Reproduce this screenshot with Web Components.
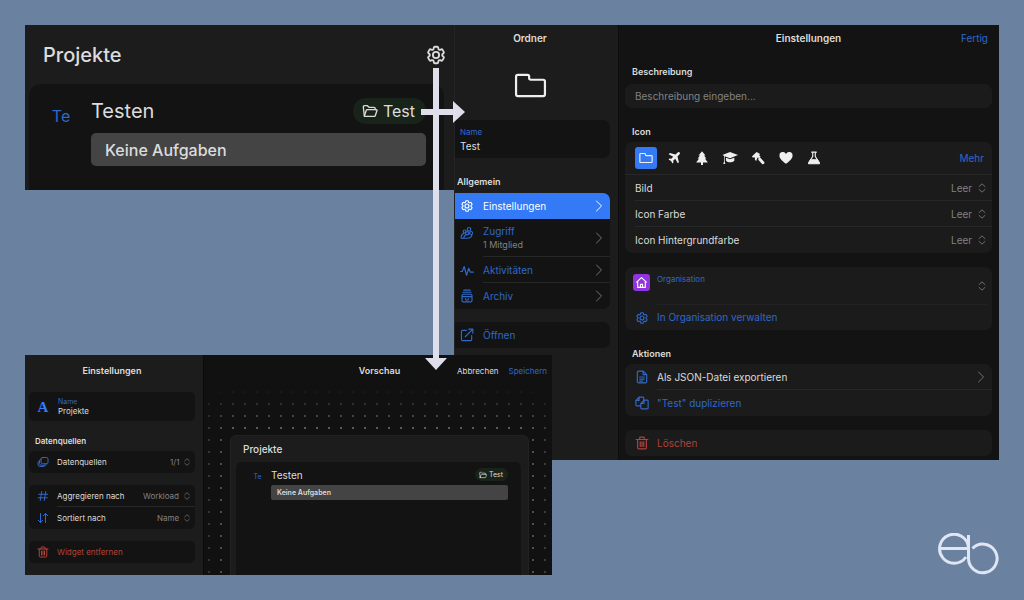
<!DOCTYPE html>
<html lang="de">
<head>
<meta charset="utf-8">
<meta name="viewport" content="width=device-width, initial-scale=1">
<title>Projekte – Einstellungen</title>
<style>
  :root {
    --panel: #1c1c1c;
    --deep: #131313;
    --text: #dcdcdc;
    --muted: #828282;
    --accent: #3068c8;
    --bright: #347af6;
    --danger: #b0433a;
    --line: #272727;
  }
  body {
    margin: 0;
    background: #6a81a0;
    color: var(--text);
    font: 10px/14px Inter, "Liberation Sans", sans-serif;
  }
</style>
</head>
<body>
<eb-stage></eb-stage>

<script>
const ICONS = {
  gear: '<path d="M9.594 3.94c.09-.542.56-.94 1.11-.94h2.593c.55 0 1.02.398 1.11.94l.213 1.281c.063.374.313.686.645.87.074.04.147.083.22.127.325.196.72.257 1.075.124l1.217-.456a1.125 1.125 0 0 1 1.37.49l1.296 2.247a1.125 1.125 0 0 1-.26 1.431l-1.003.827c-.293.241-.438.613-.43.992a7.723 7.723 0 0 1 0 .255c-.008.378.137.75.43.991l1.004.827c.424.35.534.955.26 1.43l-1.298 2.247a1.125 1.125 0 0 1-1.369.491l-1.217-.456c-.355-.133-.75-.072-1.076.124a6.47 6.47 0 0 1-.22.128c-.331.183-.581.495-.644.869l-.213 1.281c-.09.543-.56.94-1.11.94h-2.594c-.55 0-1.019-.398-1.11-.94l-.213-1.281c-.062-.374-.312-.686-.644-.87a6.52 6.52 0 0 1-.22-.127c-.325-.196-.72-.257-1.076-.124l-1.217.456a1.125 1.125 0 0 1-1.369-.49l-1.297-2.247a1.125 1.125 0 0 1 .26-1.431l1.004-.827c.292-.24.437-.613.43-.991a6.932 6.932 0 0 1 0-.255c.007-.38-.138-.751-.43-.992l-1.004-.827a1.125 1.125 0 0 1-.26-1.43l1.297-2.247a1.125 1.125 0 0 1 1.37-.491l1.216.456c.356.133.751.072 1.076-.124.072-.044.146-.086.22-.128.332-.183.582-.495.644-.869l.214-1.28Z"/><circle cx="12" cy="12" r="3.4"/>',
  folder: '<path d="M1.500 5.600a1.300 1.300 0 0 1 1.300-1.300h7a1.200 1.200 0 0 1 1.200 1.200v1.100a1.200 1.200 0 0 0 1.200 1.200H21.200A1.300 1.300 0 0 1 22.500 9.100V18.400A1.300 1.300 0 0 1 21.200 19.700H2.800A1.300 1.300 0 0 1 1.500 18.400Z"/>',
  folderOpen: '<path d="M3.500 19.500 2 6A1.800 1.800 0 0 1 3.800 4H8l2.500 2.500H18A1.800 1.800 0 0 1 19.800 8.300V10"/><path d="M3.500 19.500 6.300 11.300A1.800 1.800 0 0 1 8 10H21.500a1 1 0 0 1 1 1.300L20 18.800A1.500 1.500 0 0 1 18.500 20H4.200A.8.8 0 0 1 3.500 19.500Z"/>',
  people: '<circle cx="15.500" cy="5.500" r="3"/><circle cx="8" cy="9.500" r="2.600"/><circle cx="19" cy="12" r="2.600"/><circle cx="12.300" cy="12.500" r="2.800"/><path d="M2 20.500c0-4 1.700-7 4-7.500M6.500 21c.2-3.500 1.700-5.500 4-6M2 20.500c1.300.8 3 .8 4.500.5h5.500c4 0 8-2 8.500-6"/>',
  pulse: '<path d="M1 14.500h2.800L7.200 6l4 15 3.800-12 2.600 6.500H23"/>',
  archive: '<path d="M6.500 2h11M5 5.500h14"/><rect x="3.500" y="9" width="17" height="13" rx="2"/><path d="M4 13h16M9.500 16.500a2.500 2.500 0 0 0 5 0"/>',
  open: '<path d="M11 4H4.500A2 2 0 0 0 2.500 6v13.500a2 2 0 0 0 2 2H18a2 2 0 0 0 2-2V13M9 15 22 2M15 2h7v7"/>',
  chevron: '<path d="m7 2 10 10L7 22"/>',
  updown: '<path d="m5 8.500 7-6.500 7 6.500M5 15.500l7 6.500 7-6.500"/>',
  plane: '<path fill="currentColor" stroke="none" d="M21.600 2.400c-1-1-2.700-.6-3.800.5L14.600 6 4.800 3.600 2.900 5.500l7.800 4.400-3.400 3.500-3-.5L2.600 14.600l4.300 2.500 2.500 4.300 1.700-1.700-.5-3 3.500-3.400 4.400 7.800 1.900-1.900L18 9.400l3.100-3.200c1.100-1.100 1.500-2.800.5-3.800Z"/>',
  tree: '<path fill="currentColor" stroke="none" d="m12 .5 6 7h-2.500l4 5.500H17l5 6.500h-8.300V24h-3.400v-4.500H2L7 13H4.500l4-5.500H6Z"/>',
  cap: '<path fill="currentColor" stroke="none" d="M12 3 .5 7.500 3 8.600V17l-1 4h3l-1-4V9.200l8 3.200L24 7.500ZM6 11.500V16c3 3.300 9 3.300 12.500 0v-4.500L12 14Z"/>',
  hammer: '<path fill="currentColor" stroke="none" d="m1.500 9.500 8-8 5.500 3-.5 3.500 2 2-2.500 2.500-2-1.500-1.500 1.500L9 17l-2.500-2 .5-3.500-2-1-1.500 1Z"/><path stroke="currentColor" stroke-width="5" d="m15 14 5.500 6"/>',
  heart: '<path fill="currentColor" stroke="none" d="M12 22C4.500 16 .8 12.500.8 8A5.900 5.900 0 0 1 12 5 5.900 5.900 0 0 1 23.200 8c0 4.500-3.700 8-11.200 14Z"/>',
  flask: '<path d="M8 2h8M9.800 2v7.500L3 20a1.200 1.200 0 0 0 1 1.800h16a1.200 1.200 0 0 0 1-1.800L14.200 9.500V2"/><path fill="currentColor" d="M6.500 15h11l3.500 6H3Z"/>',
  home: '<path d="M3 11.500 12 3l9 8.500M5 10v11h14V10"/><path d="M10 21v-5.500h4V21"/>',
  file: '<path d="M14 2H6a2 2 0 0 0-2 2v16a2 2 0 0 0 2 2h12a2 2 0 0 0 2-2V8ZM14 2v6h6M8 12h8M8 15.500h8M8 19h5"/>',
  copy: '<path d="M9.500 17H3a1.500 1.500 0 0 1-1.500-1.500V7.500L7 2h6.500A1.500 1.500 0 0 1 15 3.500V6.500M7 2v5.500H1.500"/><path d="M15.500 7H21a1.500 1.500 0 0 1 1.500 1.500V20.500A1.500 1.500 0 0 1 21 22H11.500A1.500 1.500 0 0 1 10 20.500V12.500ZM15.500 7v5.500H10"/>',
  trash: '<path d="M2 6h20M8 6V3.500A1.500 1.500 0 0 1 9.500 2h5A1.500 1.500 0 0 1 16 3.500V6M4.500 6v14A2 2 0 0 0 6.500 22h11a2 2 0 0 0 2-2V6M9 10v8M12 10v8M15 10v8"/>',
  stack: '<rect x="8" y="3" width="14" height="12.500" rx="3"/><path d="M8 6.500C6 6.500 5 7.500 5 9.500v5.500a3.500 3.500 0 0 0 3.500 3.500H16c2 0 3-1 3-3M5 10c-2 .3-3 1.500-3 3.500v3A4.500 4.500 0 0 0 6.500 21H13c2 0 3-1 3-2.500"/>',
  hash: '<path d="M9.500 3 6.500 21M17.500 3l-3 18M3.500 8.500h18M2.500 15.500h18"/>',
  sort: '<path d="M7 3v18M2.500 16.500 7 21l4.500-4.500M17 21V3M12.500 7.500 17 3l4.500 4.500"/>'
};

const define = (tag, css, markup, setup) => {
  const template = document.createElement('template');
  template.innerHTML = `<style>
    *, *::before { box-sizing: border-box; }
    button, input, select { font: inherit; color: inherit; background: none; border: 0; padding: 0; margin: 0; appearance: none; text-align: left; min-width: 0; outline: 0; }
    h1, h2, h3, p { margin: 0; font: inherit; }
    a { color: inherit; text-decoration: none; }
    ${css}</style>${markup}`;
  customElements.define(tag, class extends HTMLElement {
    constructor() {
      super();
      this.attachShadow({ mode: 'open' }).append(template.content.cloneNode(true));
    }
    connectedCallback() { setup?.(this, this.shadowRoot); }
  });
};

define('eb-icon', `
  :host { display: inline-flex; flex: none; width: var(--icon, 14px); height: var(--icon, 14px); }
  svg { width: 100%; height: 100%; display: block; fill: none; stroke: currentColor; stroke-linecap: round; stroke-linejoin: round; stroke-width: var(--stroke, 2); overflow: visible; }
`, '<svg viewBox="0 0 24 24" aria-hidden="true"></svg>', (host, root) => {
  root.querySelector('svg').innerHTML = ICONS[host.getAttribute('name')] || '';
});

/* Window heading with optional actions on the right */
define('title-bar', `
  :host { display: grid; grid-template-columns: 1fr auto 1fr; align-items: center; height: var(--bar, 26px); }
  h2 { grid-column: 2; font-weight: 600; }
  div { display: flex; justify-content: flex-end; gap: 10px; }
`, '<h2><slot></slot></h2><div><slot name="actions"></slot></div>');

define('text-button', `
  :host { display: inline-flex; color: var(--accent); }
`, '<button type="button"><slot></slot></button>');

define('section-title', `
  :host { display: block; font-weight: 600; font-size: var(--section, 9px); }
`, '<h3><slot></slot></h3>');

define('list-card', `
  :host { display: flex; flex-direction: column; background: var(--card, var(--deep)); border-radius: var(--round, 7px); overflow: hidden; }
`, '<slot></slot>');

/* Clickable row: icon, caption, optional second line and chevron */
define('action-row', `
  :host { display: block; color: var(--accent); }
  :host([tone=plain]) { color: var(--text); }
  :host([tone=danger]) { color: var(--danger); }
  :host([active]) { background: var(--bright); color: #fff; }
  button { display: flex; width: 100%; height: var(--row, 26px); padding-left: var(--lead, 7px); gap: var(--gap, 9px); align-items: stretch; }
  eb-icon { align-self: center; }
  .icon { color: var(--accent); }
  :host([active]) .icon, :host([tone=danger]) .icon { color: inherit; }
  .body { flex: 1; display: flex; align-items: center; padding-right: 5px; border-bottom: 1px solid transparent; }
  :host([divider]) .body { border-color: var(--line); }
  .text { flex: 1; display: flex; flex-direction: column; }
  .note { color: var(--muted); font-size: 9px; }
  .note:empty { display: none; }
  :host([note]) .icon { align-self: flex-start; margin-top: 7px; }
  .chevron { --icon: 12px; color: #747474; }
  :host(:not([chevron])) .chevron { display: none; }
  :host([active]) .chevron { color: #fff; }
`, `<button type="button"><eb-icon class="icon"></eb-icon><span class="body"><span class="text"><span><slot></slot></span><span class="note"></span></span><eb-icon class="chevron" name="chevron"></eb-icon></span></button>`,
(host, root) => {
  root.querySelector('.note').textContent = host.getAttribute('note') || '';
  const icon = document.createElement('eb-icon');
  icon.className = 'icon';
  icon.setAttribute('name', host.getAttribute('icon'));
  root.querySelector('.icon').replaceWith(icon);
});

/* Row holding a drop-down */
define('select-row', `
  :host { display: flex; height: var(--row, 26px); padding-left: var(--lead, 10px); gap: var(--gap, 7px); align-items: stretch; }
  ::slotted(eb-icon) { align-self: center; color: var(--accent); }
  .body { flex: 1; display: flex; align-items: center; gap: var(--arrow-gap, 4px); padding-right: var(--arrow-end, 5px); border-bottom: 1px solid transparent; }
  :host([divider]) .body { border-color: var(--line); }
  label { flex: 1; white-space: nowrap; }
  select { color: var(--muted); }
  eb-icon { --icon: var(--arrow, 10px); color: var(--muted); }
`, `<slot name="icon"></slot><div class="body"><label for="choice"><slot></slot></label><select id="choice"><option></option></select><eb-icon name="updown"></eb-icon></div>`,
(host, root) => { root.querySelector('option').textContent = host.getAttribute('value'); });

define('name-field', `
  :host { display: flex; align-items: center; background: var(--deep); padding-left: 7px; gap: var(--gap, 7px); height: var(--field, 38px); border-radius: var(--round, 7px); }
  div { flex: 1; display: flex; flex-direction: column; min-width: 0; }
  label { color: var(--accent); font-size: var(--caption, 8px); line-height: var(--caption-line, 14px); }
  input { width: 100%; height: var(--value-line, 14px); }
`, '<slot name="icon"></slot><div><label for="name">Name</label><input id="name" type="text"></div>',
(host, root) => { root.querySelector('input').value = host.getAttribute('value'); });

/* Project list widget, used at full size and as a small preview */
define('project-widget', `
  :host { display: flex; flex-direction: column; background: var(--panel);
    --head: 59px; --head-pad: 18px; --size: 20px; --sub: 16px; --inset: 0 10px 0 4px; --col: 62px; --te-pad: 2px;
    --pad: 14px 18px 24px 0; --line-h: 26px; --te-h: 36px; --v: 9px; --bar-h: 33px; --bar-pad: 14px; --r: 12px; --bar-r: 5px;
    --pill: 0 11px 0 9px; --pill-gap: 5px; --pill-icon: 16px; --head-size: 20px; }
  :host([small]) { border: 1px solid #222; border-bottom: 0; border-radius: 6px 6px 0 0;
    --head: 26px; --head-pad: 12px; --size: 10px; --sub: 7px; --inset: 0 7px 0 5px; --col: 35px; --te-pad: 8px;
    --pad: 6px 13px 0 0; --line-h: 13px; --te-h: 18px; --v: 4px; --bar-h: 15px; --bar-pad: 6px; --r: 6px; --bar-r: 2px;
    --pill: 0 5px 0 4px; --pill-gap: 2px; --pill-icon: 8px; --head-size: 10px; }
  header { display: flex; justify-content: space-between; align-items: center; height: var(--head); padding: 0 7px 0 var(--head-pad); }
  h2 { font-size: var(--head-size); font-weight: 500; }
  section { flex: 1; display: grid; grid-template-columns: var(--col) 1fr; grid-template-rows: var(--line-h) var(--bar-h); row-gap: var(--v);
    margin: var(--inset); padding: var(--pad); background: var(--deep); border-radius: var(--r) var(--r) 0 0; }
  .te { color: var(--accent); font-size: var(--sub); line-height: var(--te-h); text-align: center; padding-left: var(--te-pad); }
  .top { display: flex; justify-content: space-between; align-items: center; font-size: var(--size); }
  .pill { display: flex; align-items: center; gap: var(--pill-gap); height: var(--line-h); padding: var(--pill); border-radius: 13px; background: #18231a; font-size: var(--sub); --icon: var(--pill-icon); }
  .bar { grid-column: 2; display: flex; align-items: center; padding-left: var(--bar-pad); background: #444; border-radius: var(--bar-r); font-size: var(--sub); font-weight: 500; }
  :host([small]) .bar { font-weight: 600; }
`, `<header><h2>Projekte</h2><slot name="tool"></slot></header>
<section><span class="te">Te</span><div class="top"><h3>Testen</h3><a class="pill" href="#test"><eb-icon name="folderOpen"></eb-icon>Test</a></div><p class="bar">Keine Aufgaben</p></section>`);

define('gear-button', `
  :host { display: block; --icon: 22px; --stroke: 2; }
  button { display: flex; }
`, '<button type="button" aria-label="Einstellungen"><eb-icon name="gear"></eb-icon></button>');

define('folder-sidebar', `
  :host { display: flex; flex-direction: column; background: var(--panel); border-left: 1px solid #242424; padding-right: 8px; }
  title-bar { padding-right: 5px; }
  .picture { --icon: 33px; --stroke: 1.6; color: #eee; align-self: center; margin: 18px 5px 18px 0; }
  name-field { --round: 0 7px 7px 0; padding-left: 5px; margin-bottom: 17px; }
  section-title { margin: 0 0 4px 2px; }
  list-card { --round: 0 7px 7px 0; margin-bottom: 13px; --lead: 5px; }
  .tall { --row: 38px; }
`, `<title-bar>Ordner</title-bar>
<eb-icon class="picture" name="folder"></eb-icon>
<name-field value="Test"></name-field>
<section-title>Allgemein</section-title>
<list-card>
  <action-row icon="gear" active chevron>Einstellungen</action-row>
  <action-row class="tall" icon="people" note="1 Mitglied" chevron divider>Zugriff</action-row>
  <action-row icon="pulse" chevron divider>Aktivitäten</action-row>
  <action-row icon="archive" chevron>Archiv</action-row>
</list-card>
<list-card><action-row icon="open">Öffnen</action-row></list-card>`);

define('icon-picker', `
  :host { display: flex; align-items: center; height: 33px; padding: 0 8px 0 10px; border-bottom: 1px solid var(--line); }
  div { flex: 1; display: flex; gap: 6px; }
  button { display: grid; place-items: center; width: 22px; height: 22px; border-radius: 3px; color: #eee; }
  button[aria-pressed=true] { background: var(--bright); }
`, '<div role="group" aria-label="Icon"></div><text-button>Mehr</text-button>',
(host, root) => {
  const names = ['folder', 'plane', 'tree', 'cap', 'hammer', 'heart', 'flask'];
  root.querySelector('div').innerHTML = names.map((name, i) =>
    `<button type="button" aria-label="${name}" aria-pressed="${i === 0}"><eb-icon name="${name}"${name === 'cap' ? ' style="--icon:16px"' : ''}></eb-icon></button>`).join('');
});

define('folder-settings', `
  :host { display: flex; flex-direction: column; background: var(--deep); padding: 0 7px 4px 6px; --card: #1b1b1b; border-left: 1px solid #0d0d0d; }
  title-bar { padding: 0 4px; margin-bottom: 14px; }
  .label { display: block; font-weight: 600; font-size: 9px; line-height: 14px; margin: 0 0 5px 7px; }
  .describe { height: 24px; padding-left: 10px; background: #1b1b1b; border-radius: 7px; margin-bottom: 17px; width: 100%; }
  .describe::placeholder { color: var(--muted); opacity: 1; }
  section-title { margin: 0 0 3px 7px; }
  .later { margin-top: 3px; }
  list-card { margin-bottom: 14px; }
  list-card:last-child { margin: 0; }
  .org { display: flex; height: 38px; padding: 7px 5px 0 8px; gap: 7px; }
  .badge { display: grid; place-items: center; width: 17px; height: 17px; border-radius: 3px; background: #9233e0; color: #fff; --icon: 13px; }
  .org .body { flex: 1; display: flex; align-items: flex-start; border-bottom: 1px solid #222; }
  .org label { flex: 1; font-size: 8px; line-height: 10px; color: var(--accent); }
  .org .arrows { --icon: 10px; color: var(--muted); margin-top: 7px; }
  .actions { --lead: 10px; --gap: 8px; }
  .tight { --row: 25px; }
`, `<title-bar>Einstellungen<text-button slot="actions">Fertig</text-button></title-bar>
<label class="label" for="describe">Beschreibung</label>
<input class="describe" id="describe" type="text" placeholder="Beschreibung eingeben...">
<section-title>Icon</section-title>
<list-card>
  <icon-picker></icon-picker>
  <select-row value="Leer" divider>Bild</select-row>
  <select-row value="Leer" divider>Icon Farbe</select-row>
  <select-row value="Leer">Icon Hintergrundfarbe</select-row>
</list-card>
<list-card>
  <div class="org"><span class="badge"><eb-icon name="home"></eb-icon></span><div class="body"><label for="org">Organisation</label><select id="org"><option></option></select><eb-icon class="arrows" name="updown"></eb-icon></div></div>
  <action-row class="actions tight" icon="gear">In Organisation verwalten</action-row>
</list-card>
<section-title class="later">Aktionen</section-title>
<list-card class="actions">
  <action-row icon="file" tone="plain" chevron divider>Als JSON-Datei exportieren</action-row>
  <action-row icon="copy">"Test" duplizieren</action-row>
</list-card>
<list-card class="actions"><action-row icon="trash" tone="danger">Löschen</action-row></list-card>`);

define('folder-window', `
  :host { display: grid; grid-template-columns: 164px minmax(0, 1fr); }
`, '<folder-sidebar></folder-sidebar><folder-settings></folder-settings>');

define('widget-sidebar', `
  :host { display: flex; flex-direction: column; background: var(--panel); padding: 4px 8px 0 4px; font-size: 8px;
    --row: 22px; --lead: 8px; --gap: 8px; --icon: 12px; --bar: 24px; --field: 29px; --caption: 7px; --caption-line: 9px; --value-line: 11px; --round: 5px;
    --section: 8px; --arrow: 8px; --arrow-gap: 3px; --arrow-end: 4px; }
  title-bar { margin-bottom: 9px; font-size: 9px; }
  .letter { width: 14px; text-align: center; font: 700 15px/20px "Liberation Serif", serif; color: var(--bright); }
  section-title { margin: 13px 0 3px 6px; }
  list-card { margin-bottom: 12px; }
  list-card:last-child { margin: 0; }
`, `<title-bar>Einstellungen</title-bar>
<name-field value="Projekte"><span class="letter" slot="icon" aria-hidden="true">A</span></name-field>
<section-title>Datenquellen</section-title>
<list-card><select-row value="1/1"><eb-icon slot="icon" name="stack"></eb-icon>Datenquellen</select-row></list-card>
<list-card>
  <select-row value="Workload" divider><eb-icon slot="icon" name="hash"></eb-icon>Aggregieren nach</select-row>
  <select-row value="Name"><eb-icon slot="icon" name="sort"></eb-icon>Sortiert nach</select-row>
</list-card>
<list-card><action-row icon="trash" tone="danger">Widget entfernen</action-row></list-card>`);

define('widget-preview', `
  :host { display: grid; grid-template-rows: auto 1fr; background: #111; border-left: 1px solid #0b0b0b; font-size: 9px; --bar: 32px; }
  title-bar { padding: 0 5px 0 8px; }
  text-button { font-size: 8px; }
  .quiet { color: var(--text); }
  .canvas { display: grid; padding: 48px 23px 0 26px; position: relative; isolation: isolate; }
  .canvas::before { content: ""; position: absolute; inset: 0; z-index: -1;
    background: radial-gradient(circle at 6px 6px, #666 0, #555 1px, transparent 1px) -1px -1px / 12px 12px;
    mask: linear-gradient(#0000, #000 40px), linear-gradient(90deg, #0006, #000 24px, #000 calc(100% - 24px), #0006); mask-composite: intersect; }
`, `<title-bar>Vorschau<text-button class="quiet" slot="actions">Abbrechen</text-button><text-button slot="actions">Speichern</text-button></title-bar>
<div class="canvas"><project-widget small></project-widget></div>`);

define('widget-window', `
  :host { display: grid; grid-template-columns: 178px minmax(0, 1fr); }
`, '<widget-sidebar></widget-sidebar><widget-preview></widget-preview>');

define('flow-arrow', `
  :host { display: flex; flex-direction: column; align-items: center; width: 22px; }
  i { flex: 1; width: 6px; background: #dfdfeb; }
  b { width: 22px; height: 12px; background: #dfdfeb; clip-path: polygon(0 0, 100% 0, 50% 100%); }
  :host([right]) { flex-direction: row; width: 44px; height: 22px; }
  :host([right]) i { width: auto; height: 6px; }
  :host([right]) b { width: 12px; height: 22px; clip-path: polygon(0 0, 100% 50%, 0 100%); }
`, '<i></i><b></b>');

define('eb-logo', `
  :host { display: block; }
  svg { display: block; width: 62px; height: 42px; fill: none; stroke: #dfe5f2; stroke-width: 3; }
`, `<svg viewBox="0 0 62 42" role="img" aria-label="eb"><path d="M2.500 15.500H31.500M31.500 14A14.500 14.500 0 1 0 29 24M31.500 2V25"/><path d="M31.500 25A14.300 14.300 0 1 0 35.500 15.500"/></svg>`);

define('eb-stage', `
  :host { display: grid; padding: 25px; grid-template-columns: 429fr 98fr 447fr; grid-template-rows: auto minmax(165px, auto) minmax(105px, auto) minmax(115px, auto); }
  project-widget { grid-area: 1 / 1; }
  folder-window { grid-area: 1 / 2 / 4 / 4; }
  widget-window { grid-area: 3 / 1 / 5 / 3; z-index: 1; }
  flow-arrow { grid-area: 1 / 1 / 3 / 2; justify-self: end; z-index: 2; margin: 43px 7px -15px 0; }
  flow-arrow[right] { grid-area: 1 / 1; margin: 76px -11px 0 0; }
  eb-logo { grid-area: 4 / 3; place-self: end; }
`, `<project-widget><gear-button slot="tool"></gear-button></project-widget>
<folder-window></folder-window>
<widget-window></widget-window>
<flow-arrow></flow-arrow>
<flow-arrow right></flow-arrow>
<eb-logo></eb-logo>`);
</script>
</body>
</html>
